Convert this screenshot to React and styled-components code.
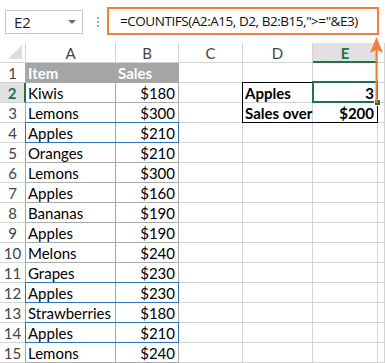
import React from 'react';
import styled, {createGlobalStyle} from 'styled-components';

const GlobalStyle = createGlobalStyle`
	html, body {
		margin: 0;
		padding: 0;
		background: #ffffff;
	}
	body {
		font-family: Lato, "Open Sans", sans-serif;
		width: 385px;
		height: 363px;
		overflow: hidden;
	}
`;

const GREEN = '#217346';
const GRID = '#d4d4d4';
const TABLE = '#a9a9a9';

const Frame = styled.div`
	position: relative;
	width: 385px;
	height: 363px;
	overflow: hidden;
`;

const FormulaBar = styled.div`
	display: flex;
	align-items: center;
	height: 43px;
	padding-bottom: 2px;
	box-sizing: border-box;
`;

const NameBox = styled.div`
	display: flex;
	align-items: center;
	justify-content: space-between;
	box-sizing: border-box;
	width: 78px;
	height: 24px;
	margin-left: 5px;
	margin-top: 3px;
	padding: 0 6px 0 8px;
	border: 1px solid #c6c6c6;
	font-family: "Open Sans", sans-serif;
	font-size: 15px;
	color: #222;
`;

const DropArrow = styled.span`
	width: 0;
	height: 0;
	border-left: 4px solid transparent;
	border-right: 4px solid transparent;
	border-top: 4px solid #6d6d6d;
`;

const Dots = styled.div`
	display: flex;
	flex-direction: column;
	gap: 2px;
	margin: 3px 8px 0 14px;
	span {
		width: 2px;
		height: 2px;
		background: #a8a8a8;
	}
`;

const FormulaBox = styled.div`
	display: flex;
	align-items: center;
	box-sizing: border-box;
	width: 272px;
	height: 28px;
	padding-left: 11px;
	border: 2px solid #f47d3b;
	font-family: "Open Sans", sans-serif;
	font-size: 13.5px;
	letter-spacing: -0.45px;
	color: #111;
	white-space: nowrap;
	overflow: hidden;
`;

const Sheet = styled.div`
	display: grid;
	grid-template-columns: 26px 90px 63px 64px 70px 65px 1fr;
	grid-auto-rows: 20px;
`;

const Corner = styled.div`
	position: relative;
	box-sizing: border-box;
	border-right: 1px solid ${GRID};
	border-bottom: 1px solid ${GRID};
	&::after {
		content: '';
		position: absolute;
		right: 3px;
		bottom: 3px;
		width: 0;
		height: 0;
		border-left: 14px solid transparent;
		border-bottom: 14px solid #dcdcdc;
	}
`;

const ColHeader = styled.div`
	display: flex;
	align-items: center;
	justify-content: center;
	box-sizing: border-box;
	border-right: 1px solid ${GRID};
	border-bottom: ${({$active}) => ($active ? `2px solid ${GREEN}` : `1px solid ${GRID}`)};
	background: ${({$active}) => ($active ? '#e1e1e1' : '#ffffff')};
	color: ${({$active}) => ($active ? GREEN : '#444')};
	font-weight: ${({$active}) => ($active ? 700 : 400)};
	font-size: 15px;
	padding-top: 1px;
`;

const RowHeader = styled.div`
	display: flex;
	align-items: center;
	justify-content: center;
	box-sizing: border-box;
	border-right: ${({$active}) => ($active ? `2px solid ${GREEN}` : `1px solid ${TABLE}`)};
	border-bottom: 1px solid ${GRID};
	background: ${({$active}) => ($active ? '#e1e1e1' : '#ffffff')};
	color: ${({$active}) => ($active ? GREEN : '#444')};
	font-weight: ${({$active}) => ($active ? 700 : 400)};
	font-size: 15px;
`;

const Cell = styled.div`
	position: relative;
	display: flex;
	align-items: center;
	justify-content: ${({$right}) => ($right ? 'flex-end' : 'flex-start')};
	box-sizing: border-box;
	padding: 1px 3px 0 2px;
	border-right: 1px solid ${({$table}) => ($table ? TABLE : GRID)};
	border-bottom: 1px solid ${({$table}) => ($table ? TABLE : GRID)};
	background: ${({$head}) => ($head ? '#a5a5a5' : 'transparent')};
	color: ${({$head}) => ($head ? '#ffffff' : '#000000')};
	font-weight: ${({$bold, $head}) => ($bold || $head ? 700 : 400)};
	font-size: 15px;
	white-space: nowrap;

	${({$outline}) =>
		$outline &&
		`
		&::after {
			content: '';
			position: absolute;
			left: -1px;
			top: -1px;
			width: 154px;
			height: 21px;
			box-sizing: border-box;
			border: 1px solid #2e75b6;
			z-index: 1;
		}
	`}

	${({$boxed}) =>
		$boxed &&
		`
		&::after {
			content: '';
			position: absolute;
			left: -1px;
			top: -1px;
			width: 136px;
			height: 41px;
			box-sizing: border-box;
			border: 1px solid #000000;
			z-index: 1;
		}
	`}

	${({$selected}) =>
		$selected &&
		`
		&::before {
			content: '';
			position: absolute;
			left: -1px;
			top: -2px;
			width: 66px;
			height: 22px;
			box-sizing: border-box;
			border: 2px solid ${GREEN};
			z-index: 2;
		}
		&::after {
			content: '';
			position: absolute;
			right: -4px;
			bottom: -4px;
			width: 5px;
			height: 5px;
			background: ${GREEN};
			border: 1px solid #ffffff;
			z-index: 3;
		}
	`}
`;

const Arrow = styled.svg`
	position: absolute;
	left: 368px;
	top: 36px;
	z-index: 5;
`;

const items = [
	['Kiwis', '$180'],
	['Lemons', '$300'],
	['Apples', '$210'],
	['Oranges', '$210'],
	['Lemons', '$300'],
	['Apples', '$160'],
	['Bananas', '$190'],
	['Apples', '$190'],
	['Melons', '$240'],
	['Grapes', '$230'],
	['Apples', '$230'],
	['Strawberries', '$180'],
	['Apples', '$210'],
	['Lemons', '$240'],
];

const outlined = [4, 12, 14];

const summary = {
	2: ['Apples', '3'],
	3: ['Sales over', '$200'],
};

export default function App() {
	return (
		<Frame>
			<GlobalStyle />
			<FormulaBar>
				<NameBox>
					E2
					<DropArrow />
				</NameBox>
				<Dots>
					<span />
					<span />
					<span />
				</Dots>
				<FormulaBox>=COUNTIFS(A2:A15, D2, B2:B15,"&gt;="&amp;E3)</FormulaBox>
			</FormulaBar>

			<Sheet>
				<Corner />
				{['A', 'B', 'C', 'D', 'E', ''].map((c, i) => (
					<ColHeader key={i} $active={c === 'E'}>
						{c}
					</ColHeader>
				))}

				<RowHeader>1</RowHeader>
				<Cell $table $head>Item</Cell>
				<Cell $table $head>Sales</Cell>
				<Cell />
				<Cell />
				<Cell />
				<Cell />

				{items.map(([name, sales], i) => {
					const row = i + 2;
					const s = summary[row];
					return (
						<React.Fragment key={row}>
							<RowHeader $active={row === 2}>{row}</RowHeader>
							<Cell $table $outline={outlined.includes(row)}>
								{name}
							</Cell>
							<Cell $table $right>
								{sales}
							</Cell>
							<Cell />
							<Cell $bold={!!s} $boxed={row === 2}>
								{s ? s[0] : ''}
							</Cell>
							<Cell $bold={!!s} $right $selected={row === 2}>
								{s ? s[1] : ''}
							</Cell>
							<Cell />
						</React.Fragment>
					);
				})}
			</Sheet>

			<Arrow width="16" height="68" viewBox="0 0 16 68">
				<line x1="8.5" y1="10" x2="8.5" y2="67" stroke="#f47d3b" strokeWidth="2" />
				<path d="M8.5 1 L15 17 L8.5 13.5 L2 17 Z" fill="#f47d3b" />
			</Arrow>
		</Frame>
	);
}
